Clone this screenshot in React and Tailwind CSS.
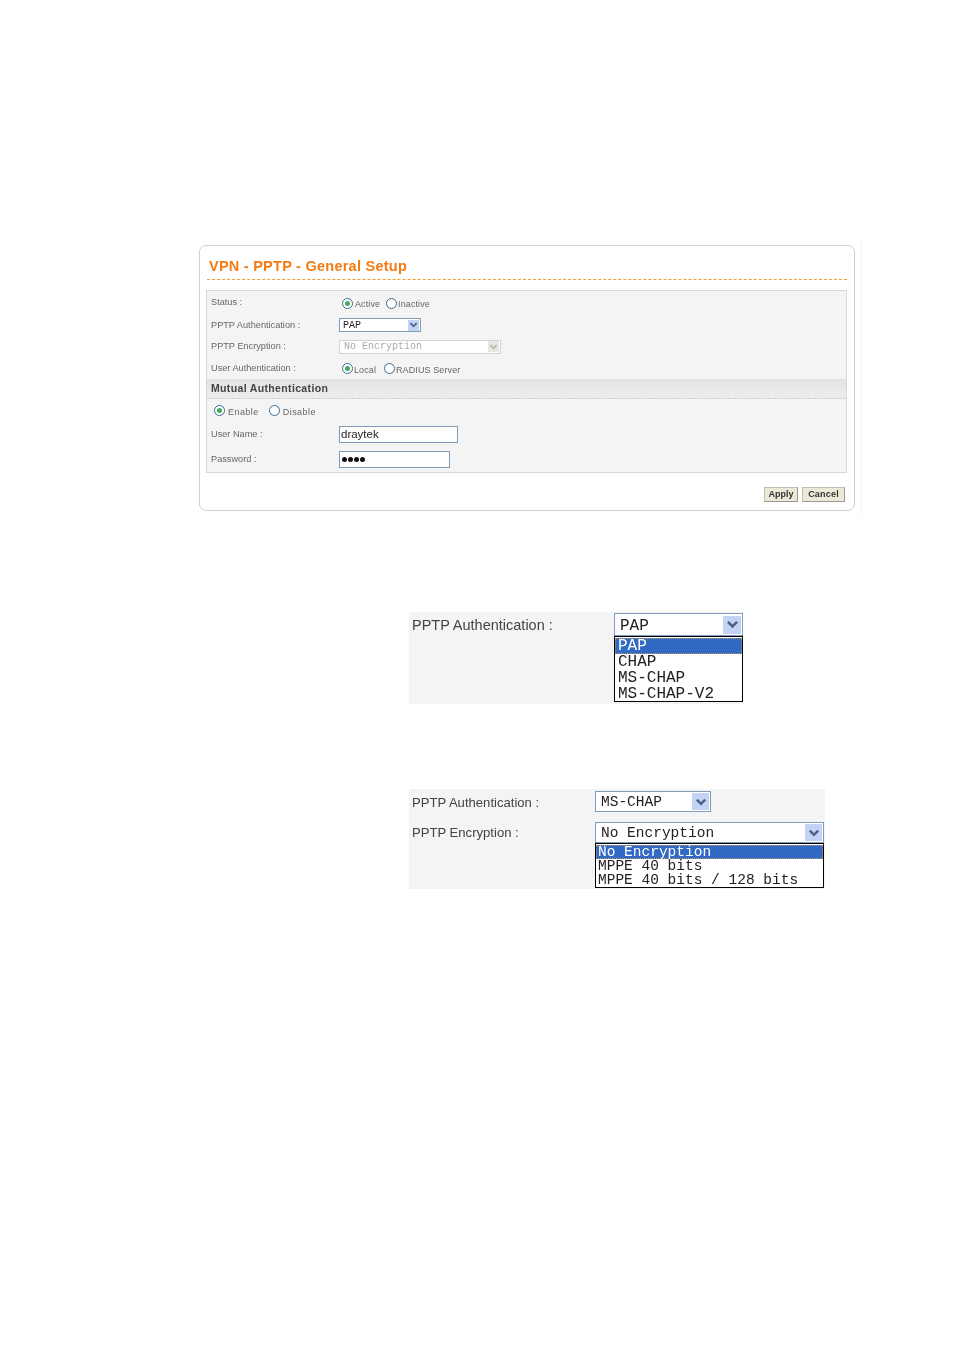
import React from 'react';

const sans = 'font-["Liberation_Sans",Arial,sans-serif]';
const mono = 'font-["Liberation_Mono","Courier_New",monospace]';

const Radio = ({ checked }) => (
  <span className="flex h-[11px] w-[11px] shrink-0 items-center justify-center rounded-full border border-[#3c6a94] bg-white">
    {checked && <span className="h-[5px] w-[5px] rounded-full bg-[#3fae5a]" />}
  </span>
);

const Arrow = ({ className, color = '#4d6185' }) => (
  <svg viewBox="0 0 10 8" className={className}>
    <path d="M1.5 2 L5 5.5 L8.5 2" fill="none" stroke={color} strokeWidth="2" />
  </svg>
);

const Row = ({ h, label, labelClass = '', children }) => (
  <div className={`flex items-center ${h}`}>
    <span className={`w-[132px] pl-[4px] text-[9.2px] text-[#666] ${labelClass}`}>{label}</span>
    {children}
  </div>
);

const RadioText = ({ children, tracking = 'tracking-[0.1px]' }) => (
  <span className={`relative -top-[1px] text-[9px] text-[#666] ${tracking}`}>{children}</span>
);

const FakeSelect = ({ value, className, text, btn, arrow, border = 'border-[#7f9db9]', textColor = 'text-[#222]', arrowColor }) => (
  <div className={`flex items-center justify-between border bg-white ${border} ${className}`}>
    <span className={`${mono} ${text} ${textColor} whitespace-pre`}>{value}</span>
    <span className={`flex items-center justify-center bg-[#c3d3f5] ${btn}`}>
      <Arrow className={arrow} color={arrowColor} />
    </span>
  </div>
);

const Option = ({ children, active, className }) => (
  <div className={`${mono} whitespace-pre ${active ? 'bg-[#316ac5] text-white outline-1 -outline-offset-1 outline-dotted outline-[#b89a60]' : 'text-[#222]'} ${className}`}>
    {children}
  </div>
);

export default function App() {
  return (
    <div className={`h-[1351px] w-[954px] overflow-hidden bg-white pt-[238px] blur-[0.3px] ${sans}`}>
      {/* Router screen capture */}
      <div className="ml-[199px] flex h-[278px]">
        <div className="mt-[7px] flex h-[266px] w-[656px] flex-col rounded-[7px] border border-[#d0d0d0] bg-white pl-[6px] pr-[7px]">
          <div className="mb-[10px] ml-[1px] flex h-[34px] items-end border-b border-dashed border-[#f0a030] pb-[4px] pl-[2px]">
            <span className="text-[14.5px] font-bold leading-[18px] tracking-[0.25px] text-[#f47a12]">VPN - PPTP - General Setup</span>
          </div>
          <div className="h-[183px] border border-[#d8d8d8] bg-[#f4f4f4]">
            <Row h="h-[23px]" label="Status :" labelClass="pt-[1px]">
              <div className="flex items-center pl-[3px] pt-[1px]">
                <Radio checked />
                <span className="ml-[2px] mr-[6px]"><RadioText>Active</RadioText></span>
                <Radio />
                <span className="ml-[1px]"><RadioText>Inactive</RadioText></span>
              </div>
            </Row>
            <Row h="h-[22px]" label="PPTP Authentication :" labelClass="pt-[1px]">
              <FakeSelect value="PAP" className="h-[14px] w-[82px] pl-[3px]" text="pt-[1px] text-[10px] leading-[12px]" btn="mr-[1px] h-[11px] w-[11px]" arrow="h-[8px] w-[9px]" />
            </Row>
            <Row h="h-[21px]" label="PPTP Encryption :">
              <FakeSelect value="No Encryption" className="h-[14px] w-[162px] bg-[#fafafa] pl-[4px]" border="border-[#d2d2d2]" textColor="text-[#aaa]" text="pt-[1px] text-[10px] leading-[12px]" btn="mr-[1px] h-[11px] w-[11px] !bg-[#e8e8e0]" arrow="h-[8px] w-[9px]" arrowColor="#b5b5b5" />
            </Row>
            <Row h="h-[22px]" label="User Authentication :" labelClass="pt-[1px]">
              <div className="flex items-center pl-[3px] pt-[1px]">
                <Radio checked />
                <span className="ml-[1px] mr-[8px]"><RadioText>Local</RadioText></span>
                <Radio />
                <span className="ml-[1px]"><RadioText>RADIUS Server</RadioText></span>
              </div>
            </Row>
            <div className="flex h-[20px] items-center border-b border-dashed border-[#d0d0d0] bg-gradient-to-b from-[#e2e2e2] to-[#ededed] pl-[4px]">
              <span className="text-[10.5px] font-bold tracking-[0.35px] text-[#444]">Mutual Authentication</span>
            </div>
            <div className="flex h-[23px] items-center pl-[7px]">
              <Radio checked />
              <span className="ml-[3px] mr-[10px]"><RadioText tracking="tracking-[0.45px]">Enable</RadioText></span>
              <Radio />
              <span className="ml-[3px]"><RadioText tracking="tracking-[0.45px]">Disable</RadioText></span>
            </div>
            <Row h="h-[25px]" label="User Name :">
              <div className="flex h-[17px] w-[119px] items-center border border-[#7f9db9] bg-white pl-[1px] text-[11.5px] text-[#222]">draytek</div>
            </Row>
            <Row h="h-[25px]" label="Password :">
              <div className="flex h-[17px] w-[111px] items-center gap-[1px] border border-[#7f9db9] bg-white pl-[2px]">
                <span className="h-[5px] w-[5px] rounded-full bg-[#111]" />
                <span className="h-[5px] w-[5px] rounded-full bg-[#111]" />
                <span className="h-[5px] w-[5px] rounded-full bg-[#111]" />
                <span className="h-[5px] w-[5px] rounded-full bg-[#111]" />
              </div>
            </Row>
          </div>
          <div className="mt-[14px] flex justify-end gap-[4px] pr-[2px]">
            <button className="flex h-[15px] w-[34px] items-center justify-center border border-[#c0c0b0] border-b-[#999] border-r-[#999] bg-[#ece9d8] text-[9px] font-bold leading-none text-[#333]">Apply</button>
            <button className="flex h-[15px] w-[43px] items-center justify-center border border-[#c0c0b0] border-b-[#999] border-r-[#999] bg-[#ece9d8] text-[9px] font-bold leading-none tracking-[0.2px] text-[#333]">Cancel</button>
          </div>
        </div>
        <div className="ml-[6px] w-px bg-[#f3f3f3]" />
      </div>

      {/* Authentication dropdown */}
      <div className="ml-[409px] mt-[96px] flex h-[92px] w-[334px] bg-[#f4f4f4]">
        <div className="w-[205px] pl-[3px] pt-[4px] text-[14.5px] leading-[18px] text-[#444]">PPTP Authentication :</div>
        <div className="w-[129px] pt-[1px]">
          <FakeSelect value="PAP" className="h-[23px] w-full pl-[5px]" text="pt-[2px] text-[16px] leading-[18px]" btn="mr-[1px] h-[18px] w-[18px]" arrow="h-[11px] w-[13px]" />
          <div className="h-[66px] border border-black bg-white pt-[1px]">
            <Option active className="pl-[3px] text-[16px] leading-[16px]">PAP</Option>
            <Option className="pl-[3px] text-[16px] leading-[16px]">CHAP</Option>
            <Option className="pl-[3px] text-[16px] leading-[16px]">MS-CHAP</Option>
            <Option className="pl-[3px] text-[16px] leading-[16px]">MS-CHAP-V2</Option>
          </div>
        </div>
      </div>

      {/* Encryption dropdown */}
      <div className="ml-[409px] mt-[85px] h-[100px] w-[416px] bg-[#f4f4f4] pt-[2px]">
        <div className="flex h-[31px] items-start">
          <div className="w-[186px] pl-[3px] pt-[3px] text-[13.1px] leading-[18px] text-[#444]">PPTP Authentication :</div>
          <FakeSelect value="MS-CHAP" className="h-[21px] w-[116px] pl-[5px]" text="text-[14.5px] leading-[18px]" btn="mr-[1px] h-[17px] w-[17px]" arrow="h-[10px] w-[12px]" />
        </div>
        <div className="flex items-start">
          <div className="w-[186px] pl-[3px] pt-[2px] text-[13.1px] leading-[18px] text-[#444]">PPTP Encryption :</div>
          <div className="w-[229px]">
            <FakeSelect value="No Encryption" className="h-[21px] w-full pl-[5px]" text="text-[14.5px] leading-[18px]" btn="mr-[1px] h-[17px] w-[17px]" arrow="h-[10px] w-[12px]" />
            <div className="h-[45px] border border-black bg-white pt-[1px]">
              <Option active className="pl-[2px] text-[14.5px] leading-[14px]">No Encryption</Option>
              <Option className="pl-[2px] text-[14.5px] leading-[14px]">MPPE 40 bits</Option>
              <Option className="pl-[2px] text-[14.5px] leading-[15px]">MPPE 40 bits / 128 bits</Option>
            </div>
          </div>
        </div>
      </div>
    </div>
  );
}
